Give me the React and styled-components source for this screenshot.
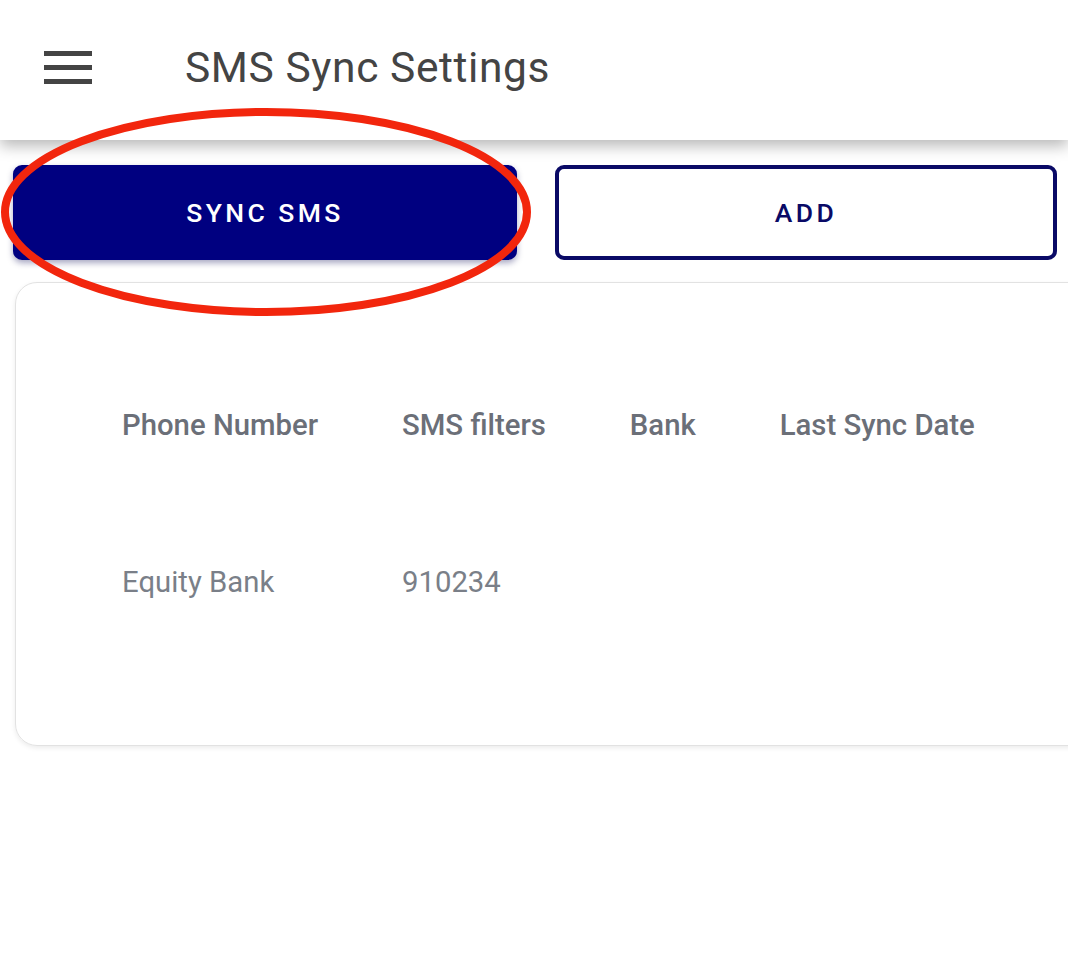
import styled, { createGlobalStyle } from "styled-components";

const navy = "#000080";

const GlobalStyle = createGlobalStyle`
  html, body {
    margin: 0;
    padding: 0;
    background: #ffffff;
    overflow: hidden;
    font-family: Roboto, "Noto Sans", Arial, sans-serif;
  }
`;

const Page = styled.div`
  position: relative;
  width: 1068px;
  height: 958px;
  overflow: hidden;
  background: #fff;
`;

const TopBar = styled.header`
  height: 140px;
  display: flex;
  align-items: center;
  background: #fff;
  box-shadow: 0 6px 14px rgba(0, 0, 0, 0.28);
  position: relative;
  z-index: 2;
`;

const MenuButton = styled.div`
  width: 48px;
  margin-left: 44px;
  display: flex;
  flex-direction: column;
  gap: 9px;
  margin-top: -6px;
`;

const MenuBar = styled.span`
  display: block;
  height: 5px;
  background: #444;
`;

const Title = styled.h1`
  margin: -6px 0 0 93px;
  font-size: 42.5px;
  font-weight: 400;
  color: #444;
  letter-spacing: 0.6px;
`;

const Actions = styled.div`
  display: grid;
  grid-template-columns: 504px 502px;
  gap: 38px;
  padding: 25px 11px 0 13px;
`;

const Button = styled.button`
  height: 95px;
  border-radius: 9px;
  font-family: Roboto, "Noto Sans", Arial, sans-serif;
  font-size: 26.5px;
  font-weight: 500;
  letter-spacing: 3.4px;
  cursor: pointer;
  border: ${(p) => (p.$filled ? `3px solid ${navy}` : "4px solid #0a0a66")};
  background: ${(p) => (p.$filled ? navy : "#fff")};
  color: ${(p) => (p.$filled ? "#fff" : "#0a0a66")};
  box-shadow: ${(p) =>
    p.$filled ? "0 3px 6px rgba(0, 0, 80, 0.35)" : "none"};
`;

const Card = styled.section`
  margin: 22px 0 0 15px;
  width: 1120px;
  height: 464px;
  box-sizing: border-box;
  border: 1.5px solid #e2e2e2;
  border-radius: 22px;
  box-shadow: 0 2px 5px rgba(0, 0, 0, 0.08);
  padding: 63px 0 0 64px;
`;

const Table = styled.table`
  border-collapse: collapse;
`;

const Cell = styled.td`
  height: 157px;
  padding: 0 42px;
  font-size: 29.3px;
  white-space: nowrap;
  vertical-align: middle;
  text-align: left;
  font-weight: ${(p) => (p.$head ? 500 : 400)};
  color: ${(p) => (p.$head ? "#6b6f78" : "#7a7f88")};
`;

const Annotation = styled.svg`
  position: absolute;
  left: 0;
  top: 100px;
  z-index: 3;
  pointer-events: none;
`;

export default function App() {
  const headers = ["Phone Number", "SMS filters", "Bank", "Last Sync Date"];
  const rows = [["Equity Bank", "910234", "", ""]];

  return (
    <Page>
      <GlobalStyle />
      <TopBar>
        <MenuButton>
          <MenuBar />
          <MenuBar />
          <MenuBar />
        </MenuButton>
        <Title>SMS Sync Settings</Title>
      </TopBar>

      <Actions>
        <Button $filled>SYNC SMS</Button>
        <Button>ADD</Button>
      </Actions>

      <Card>
        <Table>
          <tbody>
            <tr>
              {headers.map((h) => (
                <Cell as="th" $head key={h}>
                  {h}
                </Cell>
              ))}
            </tr>
            {rows.map((r, i) => (
              <tr key={i}>
                {r.map((c, j) => (
                  <Cell key={j}>{c}</Cell>
                ))}
              </tr>
            ))}
          </tbody>
        </Table>
      </Card>

      <Annotation width="540" height="230" viewBox="0 0 540 230">
        <ellipse
          cx="266"
          cy="112"
          rx="261"
          ry="100"
          fill="none"
          stroke="#f2260d"
          strokeWidth="8"
        />
      </Annotation>
    </Page>
  );
}
